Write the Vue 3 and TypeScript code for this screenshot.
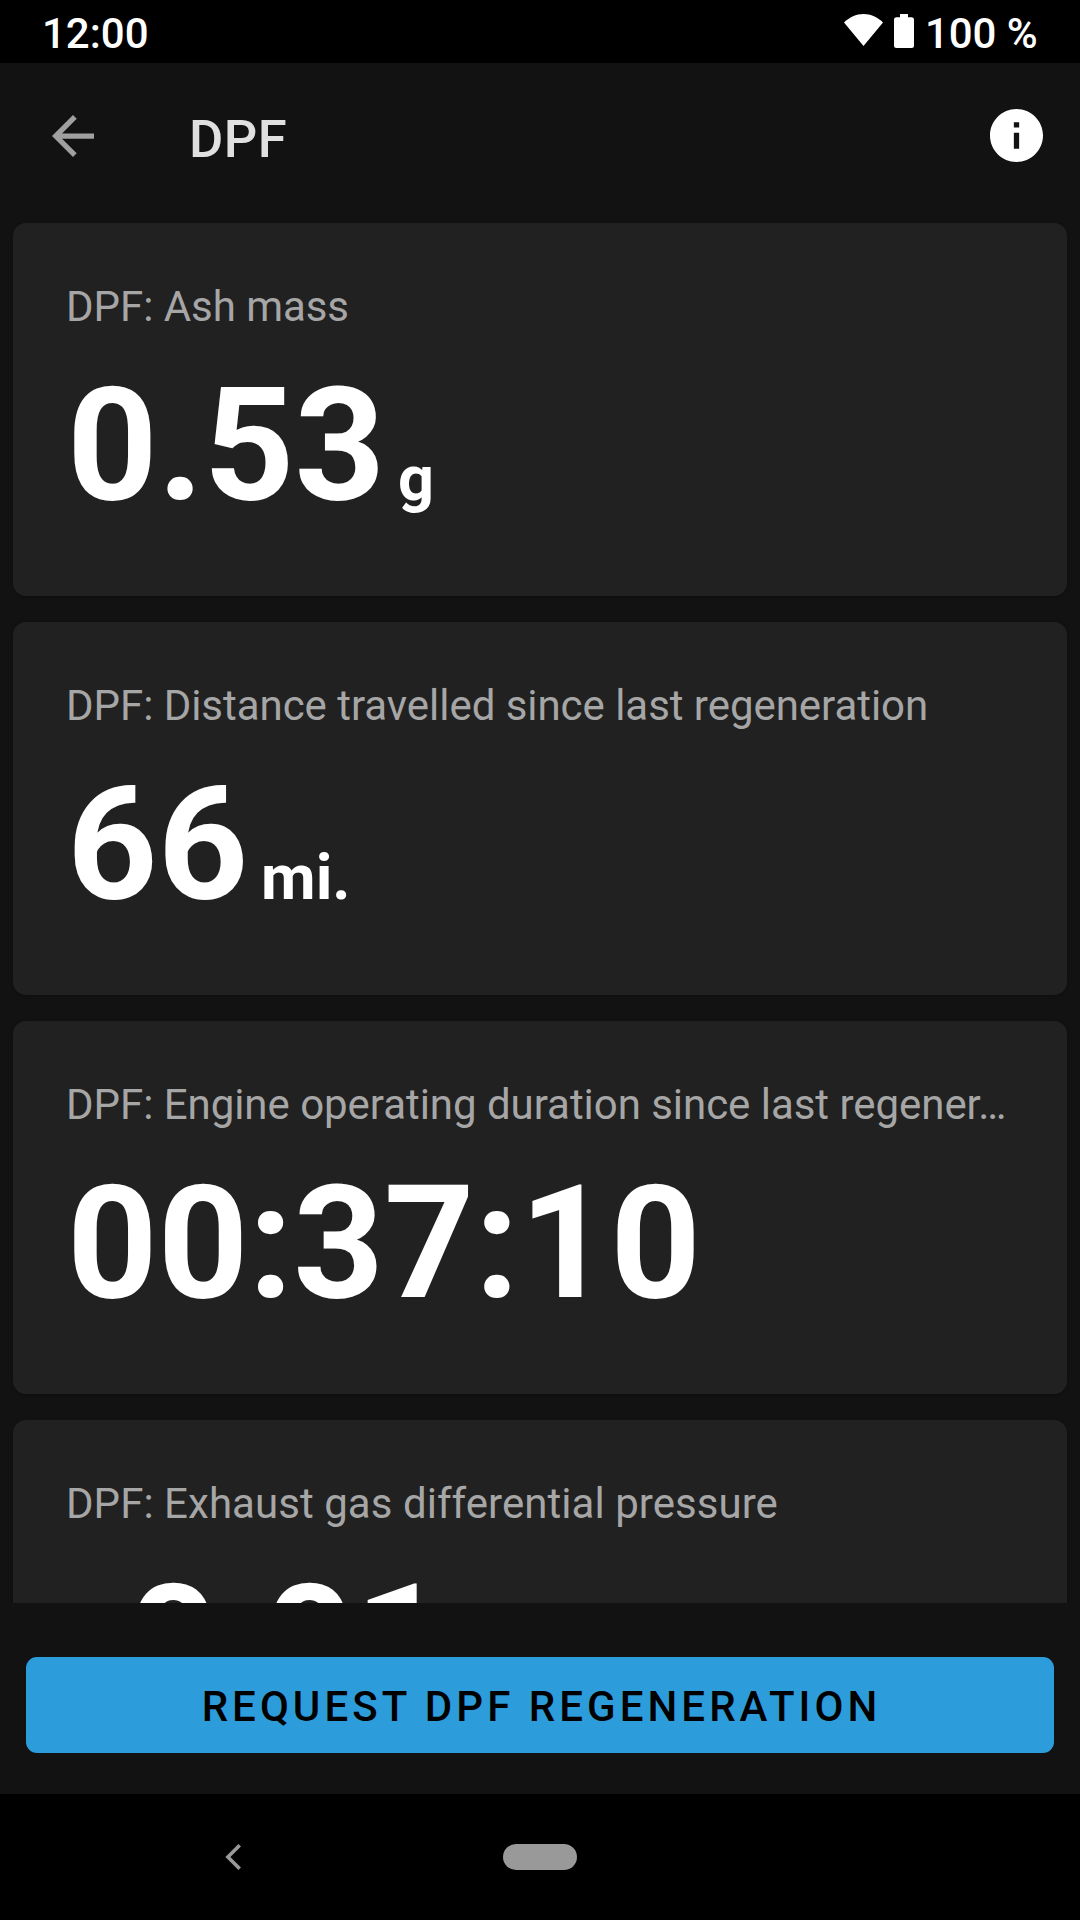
<script setup lang="ts">
interface Reading {
  label: string
  value: string
  unit?: string
}

const readings: Reading[] = [
  { label: 'DPF: Ash mass', value: '0.53', unit: 'g' },
  { label: 'DPF: Distance travelled since last regeneration', value: '66', unit: 'mi.' },
  { label: 'DPF: Engine operating duration since last regener…', value: '00:37:10' },
  { label: 'DPF: Exhaust gas differential pressure', value: '-0.01' },
]
</script>

<template>
  <div class="screen">
    <header class="status">
      <span class="time">12:00</span>
      <svg class="wifi" viewBox="0 0 39 32"><path d="M19.5 32 0 8.6C5.500 3 12 0 19.500 0S33.500 3 39 8.600Z" /></svg>
      <svg class="battery" viewBox="0 0 20 34"><path d="M6 0h8v3.300h3.500a2.500 2.500 0 0 1 2.500 2.500v25.700a2.500 2.500 0 0 1-2.500 2.500h-15A2.500 2.500 0 0 1 0 31.500V5.800a2.500 2.500 0 0 1 2.500-2.500H6Z" /></svg>
      <span class="percent">100 %</span>
    </header>

    <nav class="toolbar">
      <svg class="back" viewBox="4 4 16 16"><path d="M20 11H7.830l5.590-5.590L12 4l-8 8 8 8 1.410-1.410L7.830 13H20v-2z" /></svg>
      <h1 class="title">DPF</h1>
      <svg class="info" viewBox="2 2 20 20"><path d="M12 2C6.480 2 2 6.480 2 12s4.480 10 10 10 10-4.480 10-10S17.520 2 12 2zm1 15h-2v-6h2v6zm0-8h-2V7h2v2z" /></svg>
    </nav>

    <main class="list">
      <section v-for="reading in readings" :key="reading.label" class="card">
        <p class="label">{{ reading.label }}</p>
        <div class="reading">
          <span class="value">{{ reading.value }}</span>
          <span v-if="reading.unit" class="unit">{{ reading.unit }}</span>
        </div>
      </section>
    </main>

    <div class="actions">
      <button type="button" class="request">REQUEST DPF REGENERATION</button>
    </div>

    <footer class="navbar">
      <svg class="nav-back" viewBox="0 0 16 26"><path d="M14.700 1.300 2.900 13l11.800 11.700" /></svg>
      <span class="home"></span>
    </footer>
  </div>
</template>

<style>
body {
  margin: 0;
  background: #000;
}
</style>

<style scoped>
.screen {
  width: 1080px;
  height: 1920px;
  display: flex;
  flex-direction: column;
  overflow: hidden;
  background: #121212;
  color: #fff;
  font-family: Roboto, "Liberation Sans", sans-serif;
}
.status {
  flex: none;
  box-sizing: border-box;
  height: 63px;
  padding: 0 43px 0 42px;
  display: flex;
  align-items: flex-start;
  background: #000;
  font-size: 42px;
  font-weight: 500;
  line-height: 67px;
}
.time {
  margin-right: auto;
}
.wifi {
  width: 39px;
  height: 32px;
  margin: 14px 11px 0 0;
  fill: #fff;
}
.battery {
  width: 20px;
  height: 34px;
  margin: 14px 11px 0 0;
  fill: #fff;
}
.percent {
  width: 112px;
  letter-spacing: -0.1px;
  white-space: nowrap;
}
.toolbar {
  flex: none;
  box-sizing: border-box;
  height: 147px;
  padding: 0 37px 0 52px;
  display: flex;
  align-items: center;
}
.back {
  width: 42px;
  height: 42px;
  margin-top: -1px;
  fill: #a0a0a0;
}
.title {
  margin: 4px auto 0 95px;
  font-size: 52.5px;
  font-weight: 500;
  line-height: 62px;
  letter-spacing: 0.5px;
  color: #e0e0e0;
}
.info {
  width: 53px;
  height: 53px;
  margin-top: -2px;
  fill: #fff;
}
.list {
  flex: none;
  box-sizing: border-box;
  height: 1393px;
  padding: 13px 13px 0;
  display: flex;
  flex-direction: column;
  gap: 26px;
  overflow: hidden;
}
.card {
  flex: none;
  box-sizing: border-box;
  height: 373px;
  padding: 56px 53px 0;
  border-radius: 13px;
  background: #212121;
  box-shadow: 0 1px 3px rgba(0, 0, 0, 0.25);
}
.label {
  margin: 0 0 18px;
  font-size: 42px;
  line-height: 56px;
  letter-spacing: -0.04px;
  color: #a6a6a6;
  white-space: nowrap;
}
.reading {
  display: flex;
  align-items: baseline;
  gap: 12.5px;
  padding-left: 1px;
  font-weight: 700;
  white-space: nowrap;
}
.value {
  font-size: 158px;
  line-height: 184px;
  letter-spacing: 0.15px;
}
.unit {
  font-size: 63px;
  line-height: 74px;
  transform: translateY(1px);
}
.card:last-child .label {
  letter-spacing: 0.05px;
}
.card:last-child .reading {
  padding-left: 0;
}
.card:last-child .value {
  letter-spacing: -0.15px;
}
.actions {
  flex: none;
  box-sizing: border-box;
  height: 191px;
  padding: 54px 26px 0;
}
.request {
  display: block;
  width: 100%;
  height: 96px;
  padding: 3px 0 0 3px;
  border: 0;
  border-radius: 11px;
  background: #2d9cdb;
  color: #000;
  font: 500 42px/50px Roboto, "Liberation Sans", sans-serif;
  letter-spacing: 4.05px;
}
.navbar {
  flex: 1;
  display: flex;
  align-items: center;
  padding-left: 225px;
  background: #000;
}
.nav-back {
  width: 16px;
  height: 26px;
  fill: none;
  stroke: #999;
  stroke-width: 3.6;
}
.home {
  width: 74px;
  height: 26px;
  margin-left: 262px;
  border-radius: 13px;
  background: #999;
}
</style>
